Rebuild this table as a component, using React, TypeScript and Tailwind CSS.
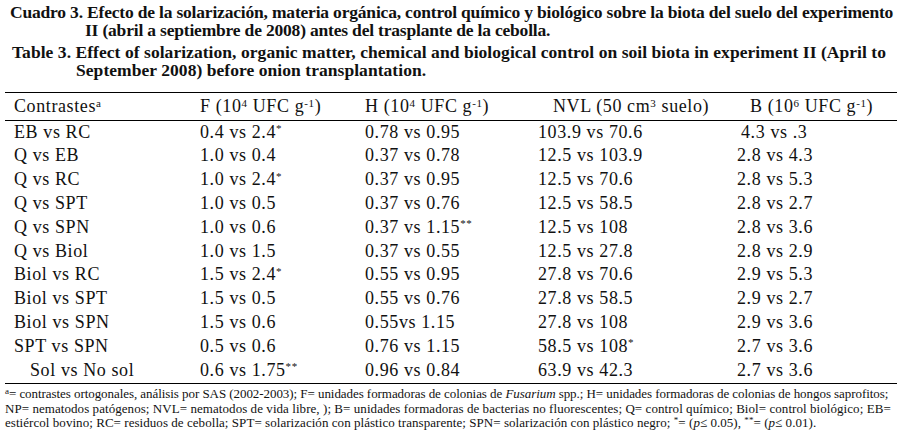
import React from "react";

const S = ({ children }: { children: React.ReactNode }) => <sup className="text-[11px]">{children}</sup>;

const rows: { c: string; f: React.ReactNode; h: React.ReactNode; n: React.ReactNode; b: React.ReactNode; indent?: boolean; bpad?: boolean }[] = [
  { c: "EB vs RC", f: <>0.4 vs 2.4<S>*</S></>, h: "0.78 vs 0.95", n: "103.9 vs 70.6", b: "4.3 vs .3", bpad: true },
  { c: "Q vs EB", f: "1.0 vs 0.4", h: "0.37 vs 0.78", n: "12.5 vs 103.9", b: "2.8 vs 4.3" },
  { c: "Q vs RC", f: <>1.0 vs 2.4<S>*</S></>, h: "0.37 vs 0.95", n: "12.5 vs 70.6", b: "2.8 vs 5.3" },
  { c: "Q vs SPT", f: "1.0 vs 0.5", h: "0.37 vs 0.76", n: "12.5 vs 58.5", b: "2.8 vs 2.7" },
  { c: "Q vs SPN", f: "1.0 vs 0.6", h: <>0.37 vs 1.15<S>**</S></>, n: "12.5 vs 108", b: "2.8 vs 3.6" },
  { c: "Q vs Biol", f: "1.0 vs 1.5", h: "0.37 vs 0.55", n: "12.5 vs 27.8", b: "2.8 vs 2.9" },
  { c: "Biol vs RC", f: <>1.5 vs 2.4<S>*</S></>, h: "0.55 vs 0.95", n: "27.8 vs 70.6", b: "2.9 vs 5.3" },
  { c: "Biol vs SPT", f: "1.5 vs 0.5", h: "0.55 vs 0.76", n: "27.8 vs 58.5", b: "2.9 vs 2.7" },
  { c: "Biol vs SPN", f: "1.5 vs 0.6", h: "0.55vs 1.15", n: "27.8 vs 108", b: "2.9 vs 3.6" },
  { c: "SPT vs SPN", f: "0.5 vs 0.6", h: "0.76 vs 1.15", n: <>58.5 vs 108<S>*</S></>, b: "2.7 vs 3.6" },
  { c: "Sol vs No sol", f: <>0.6 vs 1.75<S>**</S></>, h: "0.96 vs 0.84", n: "63.9 vs 42.3", b: "2.7 vs 3.6", indent: true },
];

const grid = "grid grid-cols-[186px_165px_173px_199px_1fr] pl-[14px]";

export default function App() {
  return (
    <div className="w-[903px] h-[437px] bg-white text-[#111] overflow-hidden" style={{ fontFamily: '"Liberation Serif", "Times New Roman", serif' }}>
      <div className="pt-[4px] font-bold text-[17.5px] leading-[17.5px]">
        <div className="pl-[10px] whitespace-nowrap tracking-[-0.19px]">Cuadro 3. Efecto de la solarización, materia orgánica, control químico y biológico sobre la biota del suelo del experimento</div>
        <div className="pl-[85px] whitespace-nowrap tracking-[-0.19px]">II (abril a septiembre de 2008) antes del trasplante de la cebolla.</div>
        <div className="pl-[12px] whitespace-nowrap mt-[5px] tracking-[0.05px]">Table 3. Effect of solarization, organic matter, chemical and biological control on soil biota in experiment II (April to</div>
        <div className="pl-[76px] whitespace-nowrap tracking-[0.05px]">September 2008) before onion transplantation.</div>
      </div>
      <div className="mt-[13px] mx-[5px] w-[892px] h-px bg-black" />
      <div className={`${grid} text-[18px] leading-[26.6px] tracking-[0.6px] whitespace-nowrap`}>
        <div>Contrastes<S>a</S></div>
        <div>F (10<S>4</S> UFC g<S>-1</S>)</div>
        <div>H (10<S>4</S> UFC g<S>-1</S>)</div>
        <div className="pl-[15px]">NVL (50 cm<S>3</S> suelo)</div>
        <div className="pl-[13px]">B (10<S>6</S> UFC g<S>-1</S>)</div>
      </div>
      <div className="mx-[5px] w-[892px] h-px bg-black" />
      <div className="text-[18px] leading-[23.8px] tracking-[0.6px] whitespace-nowrap">
        {rows.map((r, i) => (
          <div key={i} className={grid}>
            <div className={r.indent ? "pl-[16px]" : ""}>{r.c}</div>
            <div>{r.f}</div>
            <div>{r.h}</div>
            <div>{r.n}</div>
            <div className={r.bpad ? "pl-[4px]" : ""}>{r.b}</div>
          </div>
        ))}
      </div>
      <div className="mt-[1px] mx-[5px] w-[892px] h-px bg-black" />
      <div className="pl-[5px] pt-[3px] text-[13px] leading-[14.5px] whitespace-nowrap">
        <div className="tracking-[-0.06px]"><sup className="text-[9px]">a</sup>= contrastes ortogonales, análisis por SAS (2002-2003); F= unidades formadoras de colonias de <i>Fusarium</i> spp.; H= unidades formadoras de colonias de hongos saprofitos;</div>
        <div className="tracking-[0.06px]">NP= nematodos patógenos; NVL= nematodos de vida libre, ); B= unidades formadoras de bacterias no fluorescentes; Q= control químico; Biol= control biológico; EB=</div>
        <div className="tracking-[0.05px]">estiércol bovino; RC= residuos de cebolla; SPT= solarización con plástico transparente; SPN= solarización con plástico negro; <sup className="text-[9px]">*</sup>= (<i>p</i>≤ 0.05), <sup className="text-[9px]">**</sup>= (<i>p</i>≤ 0.01).</div>
      </div>
    </div>
  );
}
